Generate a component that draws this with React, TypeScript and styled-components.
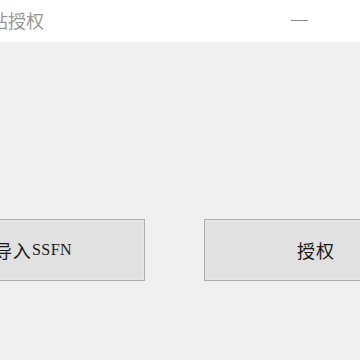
import React from 'react'
import styled, { createGlobalStyle } from 'styled-components'

const GlobalStyle = createGlobalStyle`
  html, body {
    margin: 0;
    padding: 0;
    background: #f0f0f0;
    overflow: hidden;
  }
`

const Window = styled('div')`
  width: 360px;
  height: 360px;
  display: flex;
  flex-direction: column;
  background: #f0f0f0;
  overflow: hidden;
`

const TitleBar = styled('div')`
  height: 42px;
  flex-shrink: 0;
  background: #ffffff;
  display: flex;
  align-items: center;
  justify-content: space-between;
  overflow: hidden;
`

const Title = styled('span')`
  margin-left: -46px;
  margin-top: -2px;
  font-family: "Noto Sans CJK SC", sans-serif;
  font-size: 18px;
  color: #999999;
  white-space: nowrap;
`

const Controls = styled('div')`
  display: flex;
  align-items: center;
`

const ControlButton = styled('div')`
  width: 46px;
  height: 42px;
  display: flex;
  align-items: center;
  justify-content: center;
  margin-right: 38px;
`

const MinimizeBar = styled('span')`
  width: 17px;
  height: 1px;
  background: #8a8a8a;
  margin-top: -2px;
`

const Body = styled('div')`
  flex: 1;
  display: flex;
  flex-direction: column;
  padding-top: 177px;
`

const ButtonRow = styled('div')`
  display: flex;
  gap: 59px;
  margin-left: -79px;
`

const ActionButton = styled('button')`
  flex-shrink: 0;
  width: 224px;
  height: 62px;
  box-sizing: border-box;
  border: 1px solid #adadad;
  background: #e1e1e1;
  box-shadow: inset 0 0 0 1px #e6e6e6;
  display: flex;
  align-items: center;
  justify-content: center;
  padding: 0;
  color: #1a1a1a;
  cursor: default;
`

const Cjk = styled('span')`
  font-family: "Noto Sans CJK SC", sans-serif;
  font-size: 18px;
  font-weight: 400;
  letter-spacing: 1px;
`

const Latin = styled('span')`
  font-family: "Liberation Serif", serif;
  font-size: 16px;
  font-weight: 400;
  letter-spacing: 0.5px;
`

const App = () => {
  return (
    <>
      <GlobalStyle />
      <Window>
        <TitleBar>
          <Title>工作站授权</Title>
          <Controls>
            <ControlButton>
              <MinimizeBar />
            </ControlButton>
          </Controls>
        </TitleBar>
        <Body>
          <ButtonRow>
            <ActionButton>
              <Cjk>导入</Cjk>
              <Latin>SSFN</Latin>
            </ActionButton>
            <ActionButton>
              <Cjk>授权</Cjk>
            </ActionButton>
          </ButtonRow>
        </Body>
      </Window>
    </>
  )
}

export default App
